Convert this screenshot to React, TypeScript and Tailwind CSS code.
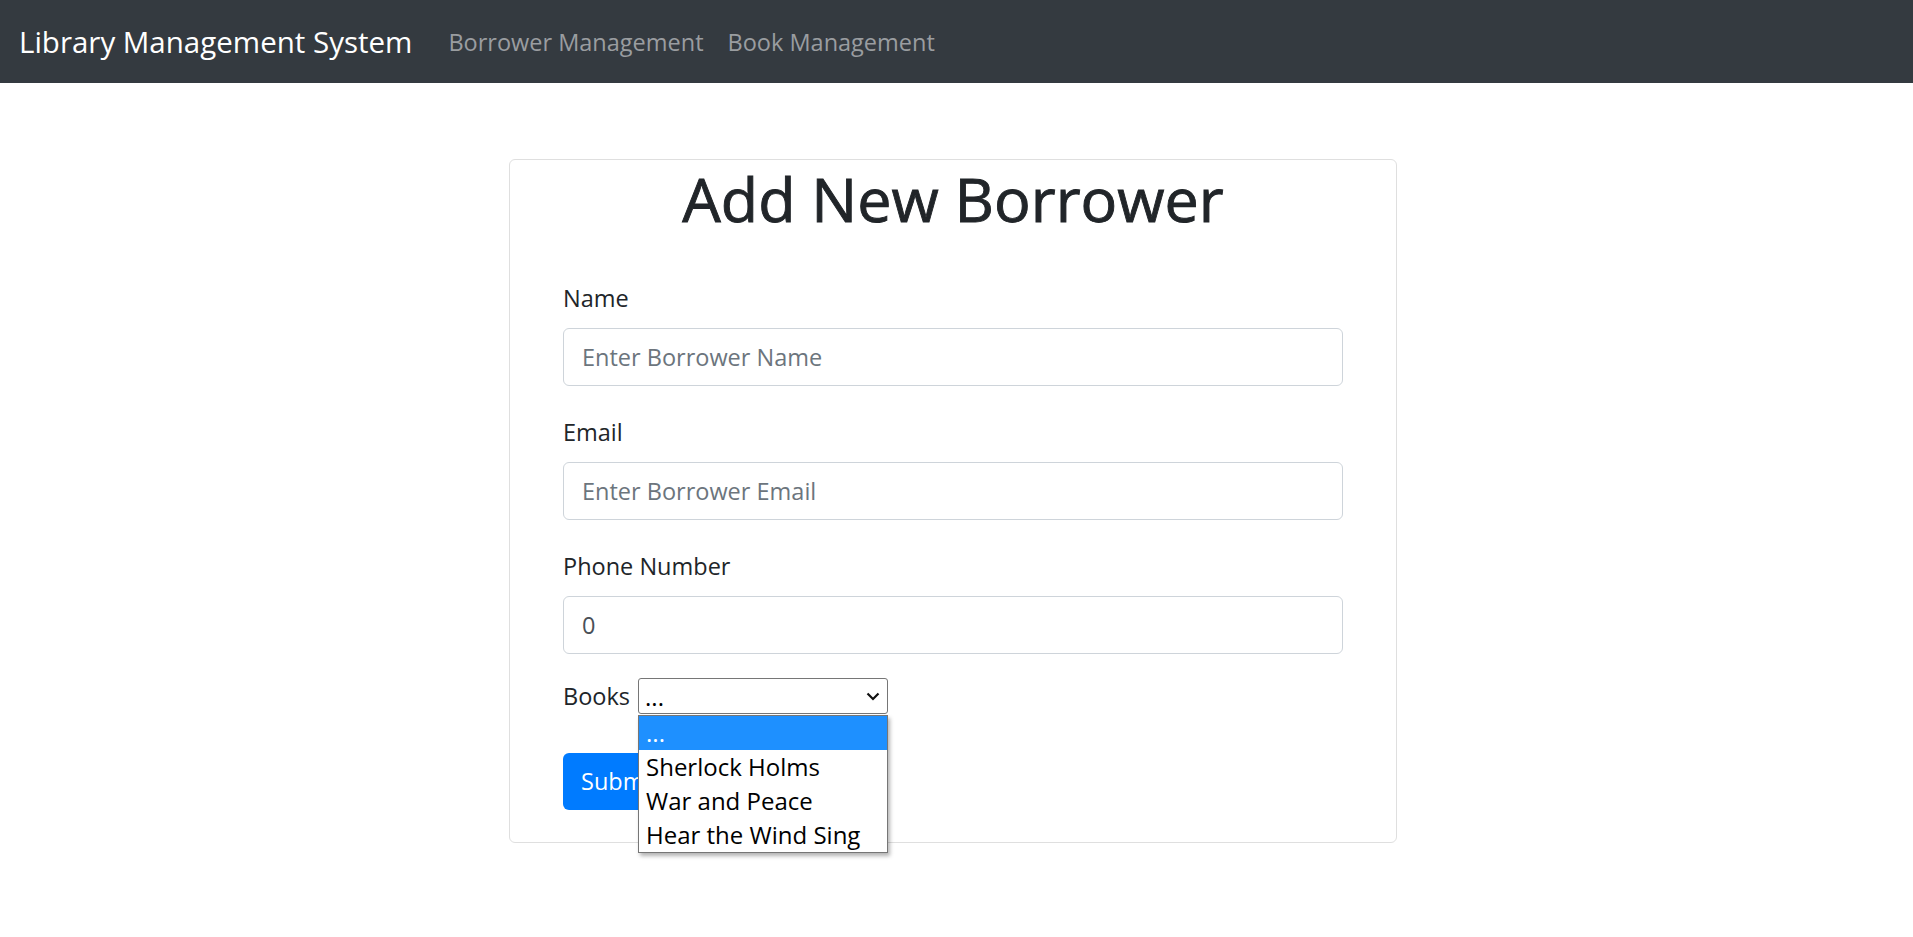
import { useState } from "react";

const books = ["...", "Sherlock Holms", "War and Peace", "Hear the Wind Sing"];

export default function App() {
  const [name, setName] = useState("");
  const [email, setEmail] = useState("");
  const [phone, setPhone] = useState("0");
  const [book, setBook] = useState("...");

  return (
    <div className="min-h-screen bg-white font-['Open_Sans',sans-serif] text-[#212529]">
      {/* Navbar */}
      <nav className="h-[83px] bg-[#343a40] flex items-center pl-[19px]">
        <span className="text-[29.5px] text-white mr-[24px] leading-[45px]">
          Library Management System
        </span>
        <a href="#" className="text-[23.5px] text-[#9a9da0] px-[12px] leading-[36px]">
          Borrower Management
        </a>
        <a href="#" className="text-[23.5px] text-[#9a9da0] px-[12px] leading-[36px]">
          Book Management
        </a>
      </nav>

      <div className="flex justify-center pt-[76px] pr-[7px]">
        {/* Card */}
        <div className="w-[888px] border border-[#dfdfdf] rounded-[6px] px-[53px] pt-[3px] pb-[32px]">
          <h1 className="text-center text-[61px] leading-[72px] font-medium [-webkit-text-stroke:0.9px_#212529] mb-[45px]">
            Add New Borrower
          </h1>

          <form onSubmit={(e) => e.preventDefault()}>
            <div className="mb-[28px]">
              <label className="block text-[23.5px] leading-[36px] mb-[12px]">Name</label>
              <input
                type="text"
                value={name}
                onChange={(e) => setName(e.target.value)}
                placeholder="Enter Borrower Name"
                className="w-full h-[58px] border border-[#ced4da] rounded-[6px] px-[18px] text-[23.5px] text-[#495057] placeholder:text-[#6c757d] outline-none"
              />
            </div>
            <div className="mb-[28px]">
              <label className="block text-[23.5px] leading-[36px] mb-[12px]">Email</label>
              <input
                type="email"
                value={email}
                onChange={(e) => setEmail(e.target.value)}
                placeholder="Enter Borrower Email"
                className="w-full h-[58px] border border-[#ced4da] rounded-[6px] px-[18px] text-[23.5px] text-[#495057] placeholder:text-[#6c757d] outline-none"
              />
            </div>
            <div className="mb-[24px]">
              <label className="block text-[23.5px] leading-[36px] mb-[12px]">Phone Number</label>
              <input
                type="text"
                value={phone}
                onChange={(e) => setPhone(e.target.value)}
                className="w-full h-[58px] border border-[#ced4da] rounded-[6px] px-[18px] text-[23.5px] text-[#495057] outline-none"
              />
            </div>

            {/* Books select with open list */}
            <div className="flex items-center h-[36px] mb-[39px]">
              <label className="text-[23.5px] leading-[36px] mr-[8px]">Books</label>
              <div className="relative w-[250px] h-[36px]">
                <select
                  value={book}
                  onChange={(e) => setBook(e.target.value)}
                  className="appearance-none w-full h-full border border-[#767676] rounded-[3px] bg-white pl-[6px] text-[24px] text-black outline-none"
                >
                  {books.map((b) => (
                    <option key={b}>{b}</option>
                  ))}
                </select>
                <svg
                  className="absolute right-[8px] top-[14px] pointer-events-none"
                  width="14"
                  height="9"
                  viewBox="0 0 14 9"
                  fill="none"
                  stroke="#111"
                  strokeWidth="2.2"
                >
                  <polyline points="1.5,1.5 7,7 12.5,1.5" />
                </svg>
                <ul className="absolute left-0 top-[37px] w-[250px] border border-[#767676] bg-white shadow-[2px_3px_4px_rgba(0,0,0,0.3)] z-10">
                  {books.map((b, i) => (
                    <li
                      key={b}
                      className={
                        i === 0
                          ? "h-[34px] leading-[34px] pl-[7px] text-[24px] bg-[#1e90ff] text-white"
                          : "h-[34px] leading-[34px] pl-[7px] text-[24px] text-black"
                      }
                    >
                      {b}
                    </li>
                  ))}
                </ul>
              </div>
            </div>

            <button
              type="submit"
              className="h-[57px] px-[18px] rounded-[6px] bg-[#007bff] text-white text-[23.5px]"
            >
              Submit
            </button>
          </form>
        </div>
      </div>
    </div>
  );
}
